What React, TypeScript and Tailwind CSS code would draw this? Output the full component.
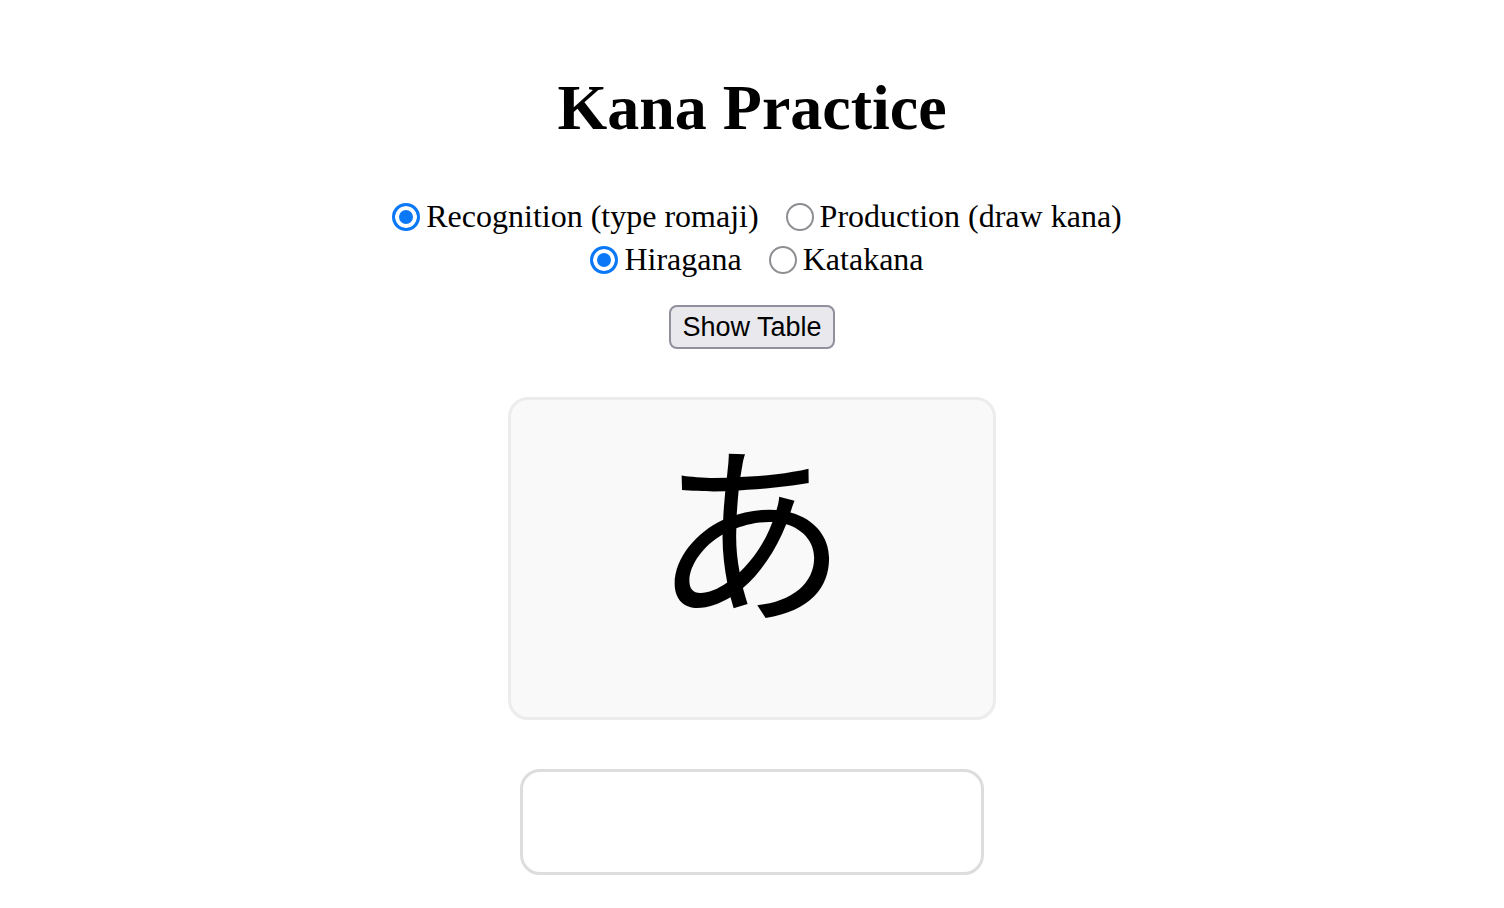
import { useState } from 'react'

const serif = { fontFamily: '"Liberation Serif", "Times New Roman", serif' }

function Radio({ name, label, checked, onChange }: { name: string; label: string; checked: boolean; onChange: () => void }) {
  return (
    <label className="flex items-center gap-[6px] cursor-pointer">
      <input
        type="radio"
        name={name}
        checked={checked}
        onChange={onChange}
        className="m-0 h-[28px] w-[28px] shrink-0 appearance-none rounded-full border-[2px] border-[#8e8e93] bg-white checked:border-[3px] checked:border-[#0b79f7] checked:bg-[#0b79f7] checked:shadow-[inset_0_0_0_4px_#fff]"
      />
      <span>{label}</span>
    </label>
  )
}

export default function App() {
  const [mode, setMode] = useState('recognition')
  const [script, setScript] = useState('hiragana')

  return (
    <div className="flex min-h-[908px] flex-col items-center bg-white pt-[72px] text-black" style={serif}>
      {/* Title */}
      <h1 className="text-[64px] font-bold leading-[71px]">Kana Practice</h1>

      {/* Options */}
      <div className="mt-[52px] flex flex-col items-center text-[32px] leading-[43px]">
        <div className="flex items-center gap-[27px] pl-[10px]">
          <Radio name="mode" label="Recognition (type romaji)" checked={mode === 'recognition'} onChange={() => setMode('recognition')} />
          <Radio name="mode" label="Production (draw kana)" checked={mode === 'production'} onChange={() => setMode('production')} />
        </div>
        <div className="flex items-center gap-[27px] pl-[10px]">
          <Radio name="script" label="Hiragana" checked={script === 'hiragana'} onChange={() => setScript('hiragana')} />
          <Radio name="script" label="Katakana" checked={script === 'katakana'} onChange={() => setScript('katakana')} />
        </div>
      </div>

      <button
        className="mt-[24px] h-[44px] w-[166px] rounded-[8px] border-[2px] border-[#8f8f9d] bg-[#e9e9ed] text-[27px] leading-none text-black"
        style={{ fontFamily: '"Liberation Sans", Arial, sans-serif' }}
      >
        Show Table
      </button>

      {/* Card */}
      <div className="mt-[48px] flex h-[323px] w-[488px] justify-center rounded-[20px] border-[3px] border-[#ececec] bg-[#f9f9f9]">
        <div
          className="mt-[4px] pr-[3px] text-[194px] leading-[240px]"
          style={{ fontFamily: '"Noto Sans CJK JP", sans-serif' }}
        >
          あ
        </div>
      </div>

      {/* Answer */}
      <input
        type="text"
        className="mt-[49px] h-[106px] w-[464px] rounded-[20px] border-[3px] border-[#dddddd] bg-white px-4 text-center text-[40px] outline-none"
      />
    </div>
  )
}
